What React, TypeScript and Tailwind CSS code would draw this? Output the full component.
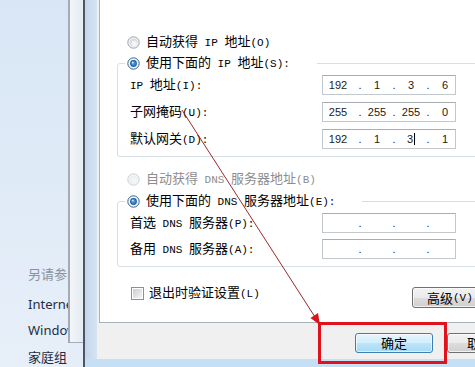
import React from "react";

function L({ children }: { children: React.ReactNode }) {
  return (
    <span className="font-['Liberation_Mono',monospace] text-[11px] whitespace-pre">
      {children}
    </span>
  );
}

function Radio({ state }: { state: "off" | "on" | "disabled" }) {
  if (state === "on") {
    return (
      <svg width="13" height="13" viewBox="0 0 13 13" className="shrink-0">
        <circle cx="6.5" cy="6.5" r="5.7" fill="#f1f5f9" stroke="#3d6385" strokeWidth="1" />
        <circle cx="6.5" cy="6.5" r="3.4" fill="#1d5ea7" />
        <circle cx="6.5" cy="6.5" r="2.3" fill="#3f8fd6" />
        <circle cx="5.8" cy="5.6" r="1.1" fill="#b9e3fb" />
      </svg>
    );
  }
  const stroke = state === "off" ? "#97a2ad" : "#c9d0d6";
  const inner = state === "off" ? "#dadde1" : "#eeeff1";
  return (
    <svg width="13" height="13" viewBox="0 0 13 13" className="shrink-0">
      <circle cx="6.5" cy="6.5" r="5.7" fill="#f6f6f6" stroke={stroke} strokeWidth="1" />
      <circle cx="6.5" cy="6.5" r="4" fill={inner} />
      <circle cx="7.2" cy="7.4" r="2.6" fill="#f4f5f6" />
    </svg>
  );
}

function IpBox({ v, caret }: { v?: string[]; caret?: boolean }) {
  const vals = v ?? ["", "", "", ""];
  return (
    <div className="grid grid-cols-[30px_14px_20px_14px_20px_14px_20px] w-[134px] h-[20px] shrink-0 border border-[#c3c8cd] border-t-[#a8adb4] bg-white items-center text-[11px] leading-[18px] text-[#1a1a1a] font-['Liberation_Sans',sans-serif]">
      <span className="text-center">{vals[0]}</span>
      <span className="text-center">.</span>
      <span className="text-center">{vals[1]}</span>
      <span className="text-center">.</span>
      <span className="flex justify-center items-center">
        {vals[2]}
        {caret ? <span className="inline-block w-px h-[12px] bg-black ml-[1px]" /> : null}
      </span>
      <span className="text-center">.</span>
      <span className="text-center">{vals[3]}</span>
    </div>
  );
}

function Row({ label, children }: { label: React.ReactNode; children: React.ReactNode }) {
  return (
    <div className="flex items-center h-[20px]">
      <div className="w-[192px] shrink-0 leading-[16px] whitespace-nowrap">{label}</div>
      {children}
    </div>
  );
}

export default function App() {
  return (
    <div className="relative flex w-[475px] h-[367px] overflow-hidden bg-white font-['Noto_Sans_CJK_SC',sans-serif] text-[13px] text-black">
      {/* control panel behind */}
      <div className="w-[68px] shrink-0 overflow-hidden bg-[linear-gradient(to_bottom,#d8e6f5,#e7eff9)] flex flex-col pl-[28px] pt-[266px] text-[13px] leading-[16px] whitespace-nowrap font-['Noto_Sans','Noto_Sans_CJK_SC',sans-serif] text-[#1e2d45]">
        <div className="text-[#8a929c]">另请参阅</div>
        <div className="mt-[14px]">Internet 选项</div>
        <div className="mt-[10px]">Windows 防火墙</div>
        <div className="mt-[11px]">家庭组</div>
      </div>

      {/* another window edge */}
      <div className="w-[15px] shrink-0 flex flex-col">
        <div className="h-[343px] border-l-2 border-b border-[#a3acb6] bg-[linear-gradient(to_right,#f3f5f7,#e4ebf3)]" />
        <div className="flex-1 bg-[#e4edf8]" />
      </div>

      {/* dialog */}
      <div className="w-[420px] shrink-0 flex flex-col border-l-2 border-[#4b5663]">
        <div className="flex h-[359px]">
          <div className="w-[12px] shrink-0 bg-[linear-gradient(to_right,#c2d6ec,#d6e4f3)]" />
          <div className="flex-1 flex flex-col bg-[#f0f0f0] pl-[2px]">
            {/* tab page */}
            <div className="h-[323px] bg-white border-l border-b border-[#aab3bd] flex flex-col pt-[34px]">
              <div className="flex items-center gap-[6px] h-[16px] leading-[16px] ml-[27px] whitespace-nowrap">
                <Radio state="off" />
                <span>
                  自动获得<L> IP </L>地址<L>(O)</L>
                </span>
              </div>

              <fieldset className="ml-[17px] mr-[13px] mt-[5px] border border-[#d5dfe5] rounded-[3px]">
                <legend className="ml-[7px] pl-[2px] pr-[27px]">
                  <div className="flex items-center gap-[6px] h-[16px] leading-[16px] whitespace-nowrap">
                    <Radio state="on" />
                    <span>
                      使用下面的<L> IP </L>地址<L>(S):</L>
                    </span>
                  </div>
                </legend>
                <div className="pl-[12px] pt-[4px] pb-[7px] flex flex-col gap-[7px]">
                  <Row label={<><L>IP </L>地址<L>(I):</L></>}>
                    <IpBox v={["192", "1", "3", "6"]} />
                  </Row>
                  <Row label={<>子网掩码<L>(U):</L></>}>
                    <IpBox v={["255", "255", "255", "0"]} />
                  </Row>
                  <Row label={<>默认网关<L>(D):</L></>}>
                    <IpBox v={["192", "1", "3", "1"]} caret />
                  </Row>
                </div>
              </fieldset>

              <div className="flex items-center gap-[6px] h-[16px] leading-[16px] ml-[27px] mt-[14px] whitespace-nowrap text-[#8d8d8d]">
                <Radio state="disabled" />
                <span>
                  自动获得<L> DNS </L>服务器地址<L>(B)</L>
                </span>
              </div>

              <fieldset className="ml-[17px] mr-[13px] mt-[6px] border border-[#d5dfe5] rounded-[3px]">
                <legend className="ml-[7px] pl-[2px] pr-[27px]">
                  <div className="flex items-center gap-[6px] h-[16px] leading-[16px] whitespace-nowrap">
                    <Radio state="on" />
                    <span>
                      使用下面的<L> DNS </L>服务器地址<L>(E):</L>
                    </span>
                  </div>
                </legend>
                <div className="pl-[12px] pt-[4px] pb-[7px] flex flex-col gap-[6px]">
                  <Row label={<>首选<L> DNS </L>服务器<L>(P):</L></>}>
                    <IpBox />
                  </Row>
                  <Row label={<>备用<L> DNS </L>服务器<L>(A):</L></>}>
                    <IpBox />
                  </Row>
                </div>
              </fieldset>

              <div className="flex items-start mt-[18px]">
                <div className="w-[281px] shrink-0 ml-[31px] h-[16px] flex items-center gap-[5px] leading-[16px] whitespace-nowrap">
                  <div className="w-[13px] h-[13px] shrink-0 border border-[#8f8f8f] bg-white p-[1px]">
                    <div className="w-full h-full bg-[linear-gradient(135deg,#c9cdd3,#f4f5f6)]" />
                  </div>
                  <span>
                    退出时验证设置<L>(L)</L>
                  </span>
                </div>
                <div className="mt-[2px] w-[75px] h-[21px] shrink-0 rounded-[3px] border border-[#707070] bg-[linear-gradient(to_bottom,#f2f2f2_0%,#ebebeb_50%,#dddddd_50%,#cfcfcf_100%)] shadow-[inset_0_0_0_1px_rgba(255,255,255,0.7)] flex items-center pl-[14px] leading-[16px] whitespace-nowrap">
                  高级<L>(V)...</L>
                </div>
              </div>
            </div>

            {/* button bar */}
            <div className="flex pl-[256px] pt-[10px] gap-[14px]">
              <div className="w-[78px] h-[20px] shrink-0 rounded-[3px] border border-[#3c7fb1] bg-[linear-gradient(to_bottom,#e5f4fc_0%,#d4eefb_50%,#bde5fb_50%,#a6d8f4_100%)] shadow-[inset_0_0_0_1px_rgba(255,255,255,0.6)] flex items-center justify-center leading-[16px]">
                确定
              </div>
              <div className="w-[66px] h-[20px] shrink-0 rounded-[3px] border border-[#707070] bg-[linear-gradient(to_bottom,#f2f2f2_0%,#ebebeb_50%,#dddddd_50%,#cfcfcf_100%)] shadow-[inset_0_0_0_1px_rgba(255,255,255,0.7)] flex items-center justify-center leading-[16px]">
                取消
              </div>
            </div>
          </div>
        </div>
        <div className="flex-1 bg-[#c5dff4]" />
      </div>

      {/* annotation: red box */}
      <div className="absolute left-[318px] top-[322px] w-[129px] h-[42px] border-[3px] border-[#e0121c]" />

      {/* annotation: arrow */}
      <svg className="absolute left-0 top-0 pointer-events-none" width="475" height="367" viewBox="0 0 475 367">
        <line x1="182" y1="110" x2="315" y2="317" stroke="#9c2a2a" strokeWidth="1" />
        <polygon points="320,325 310.5,318 318,313" fill="#d8141c" />
      </svg>
    </div>
  );
}
